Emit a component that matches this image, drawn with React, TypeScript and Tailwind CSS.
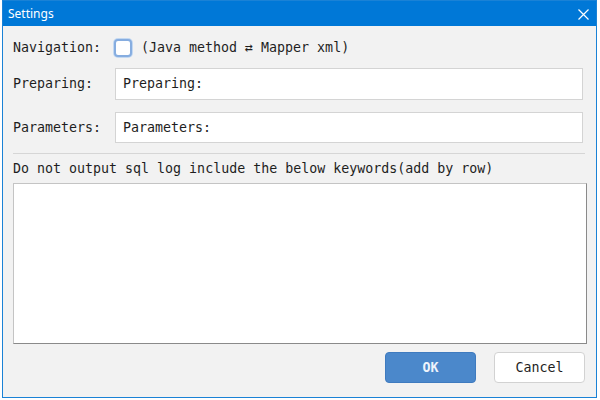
import React from "react";

const mono = "font-['DejaVu_Sans_Mono','Liberation_Mono',monospace] text-[13.3px] text-[#1e1e1e]";

export default function App() {
    return (
        <div className="w-[600px] h-[400px] bg-white overflow-hidden">
            <div className="ml-[2px] w-[595px] h-[398px] border border-[#1a82d6] bg-[#f2f2f2] flex flex-col">
                {/* title bar */}
                <div className="h-[25px] bg-[#0078d7] flex items-center justify-between pl-[5px] pr-[7px] shrink-0">
                    <span className="font-['Noto_Sans',sans-serif] text-[12px] text-white">Settings</span>
                    <svg width="11" height="11" viewBox="0 0 11 11" className="mt-[1px]">
                        <path d="M0.5 0.5 L10.5 10.5 M10.5 0.5 L0.5 10.5" stroke="white" strokeWidth="1.2" fill="none" />
                    </svg>
                </div>

                <div className={`flex flex-col pl-[10px] ${mono}`}>
                    <div className="mt-[13px] h-[18px] flex items-center">
                        <span className="w-[101px]">Navigation:</span>
                        <div className="w-[18px] h-[18px] rounded-[4px] bg-white border-2 border-[#86ade0] shadow-[0_0_0_1px_#c3d8f1]" />
                        <span className="ml-[9px]">(Java method ⇄ Mapper xml)</span>
                    </div>

                    <div className="mt-[11px] h-[32px] flex items-center">
                        <span className="w-[102px]">Preparing:</span>
                        <div className="w-[468px] h-[32px] bg-white border border-[#d4d4d4] flex items-center pl-[7px]">
                            Preparing:
                        </div>
                    </div>

                    <div className="mt-[12px] h-[31px] flex items-center">
                        <span className="w-[102px]">Parameters:</span>
                        <div className="w-[468px] h-[31px] bg-white border border-[#d4d4d4] flex items-center pl-[7px]">
                            Parameters:
                        </div>
                    </div>

                    <div className="mt-[10px] w-[572px] h-px bg-[#d6d6d6]" />

                    <div className="mt-[7px] h-[16px] leading-[16px]">
                        Do not output sql log include the below keywords(add by row)
                    </div>

                    <div className="mt-[6px] w-[574px] h-[161px] bg-white border border-[#c4c4c4] border-b-[#8a8a8a] border-r-[#8a8a8a]" />

                    <div className="mt-[8px] flex justify-end gap-[18px] pr-[11px]">
                        <button className="w-[91px] h-[31px] rounded-[4px] bg-[#4b88cb] border border-[#3f7bbf] text-[#eef3fb] font-bold">
                            OK
                        </button>
                        <button className="w-[91px] h-[31px] rounded-[4px] bg-white border border-[#d2d2d2] text-[#1e1e1e]">
                            Cancel
                        </button>
                    </div>
                </div>
            </div>
        </div>
    );
}
